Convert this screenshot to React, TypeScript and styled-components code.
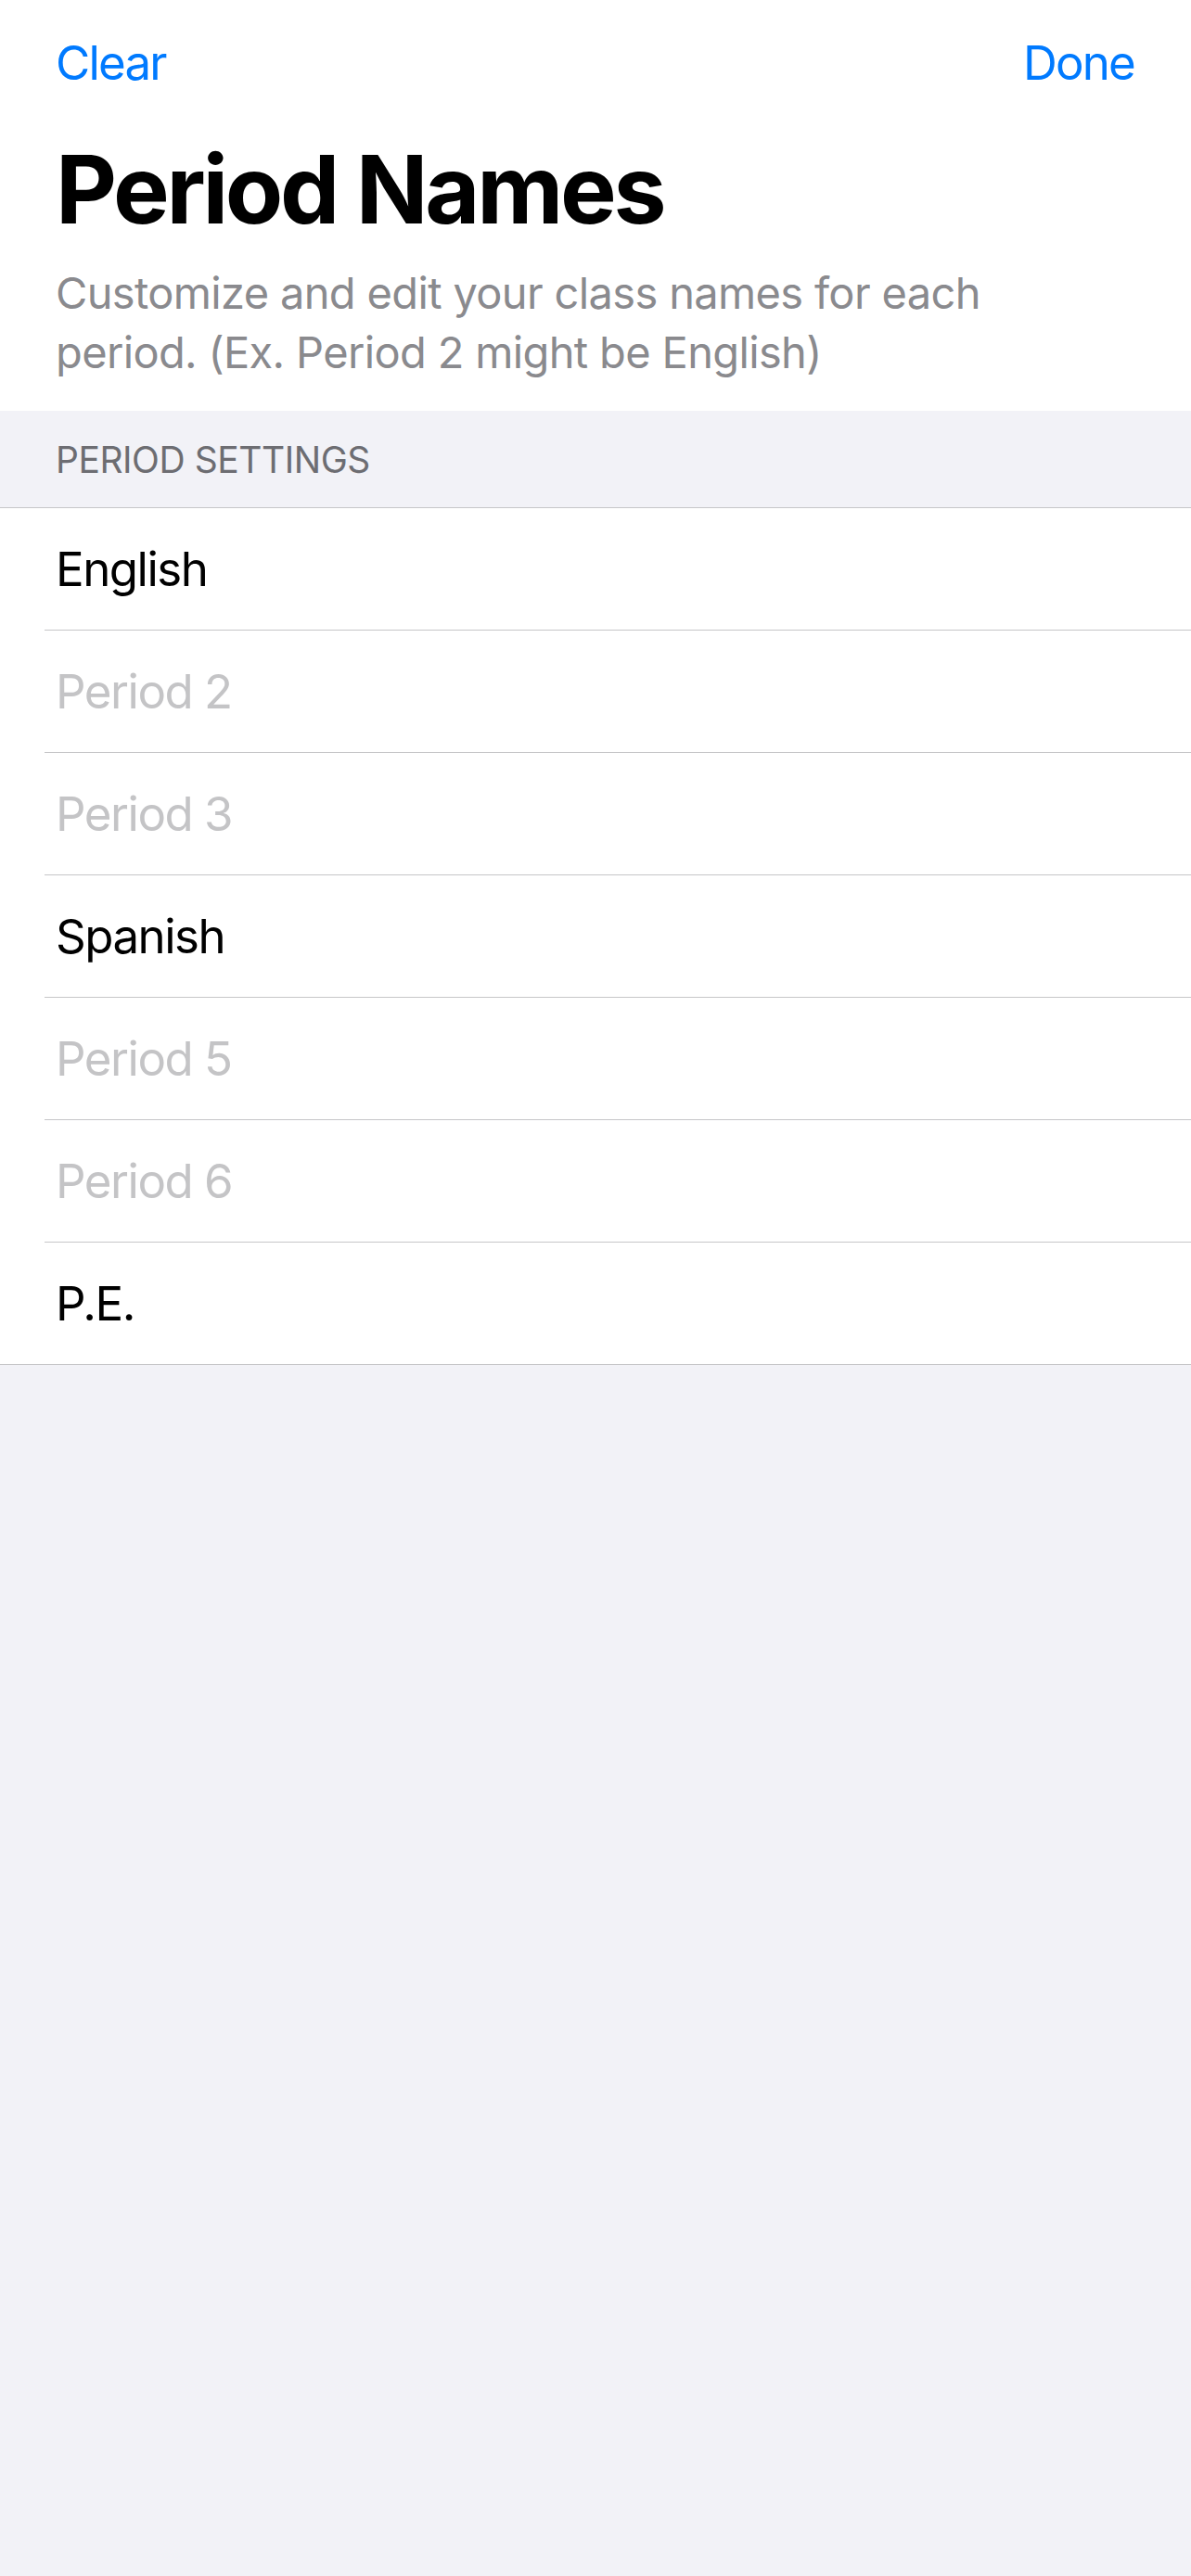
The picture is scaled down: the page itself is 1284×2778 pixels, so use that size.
import React from "react";
import styled, { createGlobalStyle } from "styled-components";

const GlobalStyle = createGlobalStyle`
  html, body {
    margin: 0;
    padding: 0;
    background: #f2f2f7;
    font-family: Inter, "Noto Sans", "Liberation Sans", sans-serif;
    -webkit-font-smoothing: antialiased;
  }
  * { box-sizing: border-box; }
`;

const Screen = styled.div`
  width: 1284px;
  min-height: 2778px;
  background: #f2f2f7;
  display: flex;
  flex-direction: column;
`;

const Header = styled.header`
  background: #ffffff;
  padding: 37px 61px 31px 60px;
  display: flex;
  flex-direction: column;
`;

const NavBar = styled.nav`
  display: flex;
  justify-content: space-between;
  align-items: center;
`;

const NavButton = styled.button`
  border: none;
  background: none;
  padding: 0;
  font-family: inherit;
  font-size: 51px;
  line-height: 61px;
  color: #007aff;
  letter-spacing: -1.8px;
  cursor: pointer;
`;

const Title = styled.h1`
  margin: 46px 0 0;
  font-size: 102px;
  line-height: 120px;
  font-weight: 700;
  color: #000000;
  letter-spacing: -3.3px;
`;

const Subtitle = styled.p`
  margin: 20px 0 0;
  font-size: 47px;
  line-height: 64px;
  color: #8a8a8e;
  letter-spacing: -0.65px;
  max-width: 1060px;
`;

const SectionHeader = styled.div`
  height: 104px;
  padding: 29px 60px 0;
  font-size: 39px;
  line-height: 47px;
  color: #6d6d72;
  text-transform: uppercase;
  letter-spacing: -0.45px;
`;

const List = styled.ul`
  list-style: none;
  margin: 0;
  padding: 0;
  background: #ffffff;
  border-top: 1px solid #c6c6c8;
  border-bottom: 1px solid #c6c6c8;
`;

const Row = styled.li`
  margin-left: 48px;
  padding-left: 12px;
  height: 132px;
  display: flex;
  align-items: center;
  border-bottom: 1px solid #c6c6c8;

  &:last-child {
    height: 131px;
    border-bottom: none;
  }
`;

const RowText = styled.span<{ $placeholder?: boolean }>`
  font-size: 51px;
  line-height: 61px;
  letter-spacing: -1.5px;
  color: ${(p) => (p.$placeholder ? "#c4c4c6" : "#000000")};
`;

const periods: { label: string; placeholder: boolean }[] = [
  { label: "English", placeholder: false },
  { label: "Period 2", placeholder: true },
  { label: "Period 3", placeholder: true },
  { label: "Spanish", placeholder: false },
  { label: "Period 5", placeholder: true },
  { label: "Period 6", placeholder: true },
  { label: "P.E.", placeholder: false },
];

export default function App() {
  return (
    <>
      <GlobalStyle />
      <Screen>
        <Header>
          <NavBar>
            <NavButton>Clear</NavButton>
            <NavButton>Done</NavButton>
          </NavBar>
          <Title>Period Names</Title>
          <Subtitle>
            Customize and edit your class names for each period. (Ex. Period 2
            might be English)
          </Subtitle>
        </Header>
        <SectionHeader>Period Settings</SectionHeader>
        <List>
          {periods.map((p) => (
            <Row key={p.label}>
              <RowText $placeholder={p.placeholder}>{p.label}</RowText>
            </Row>
          ))}
        </List>
      </Screen>
    </>
  );
}
